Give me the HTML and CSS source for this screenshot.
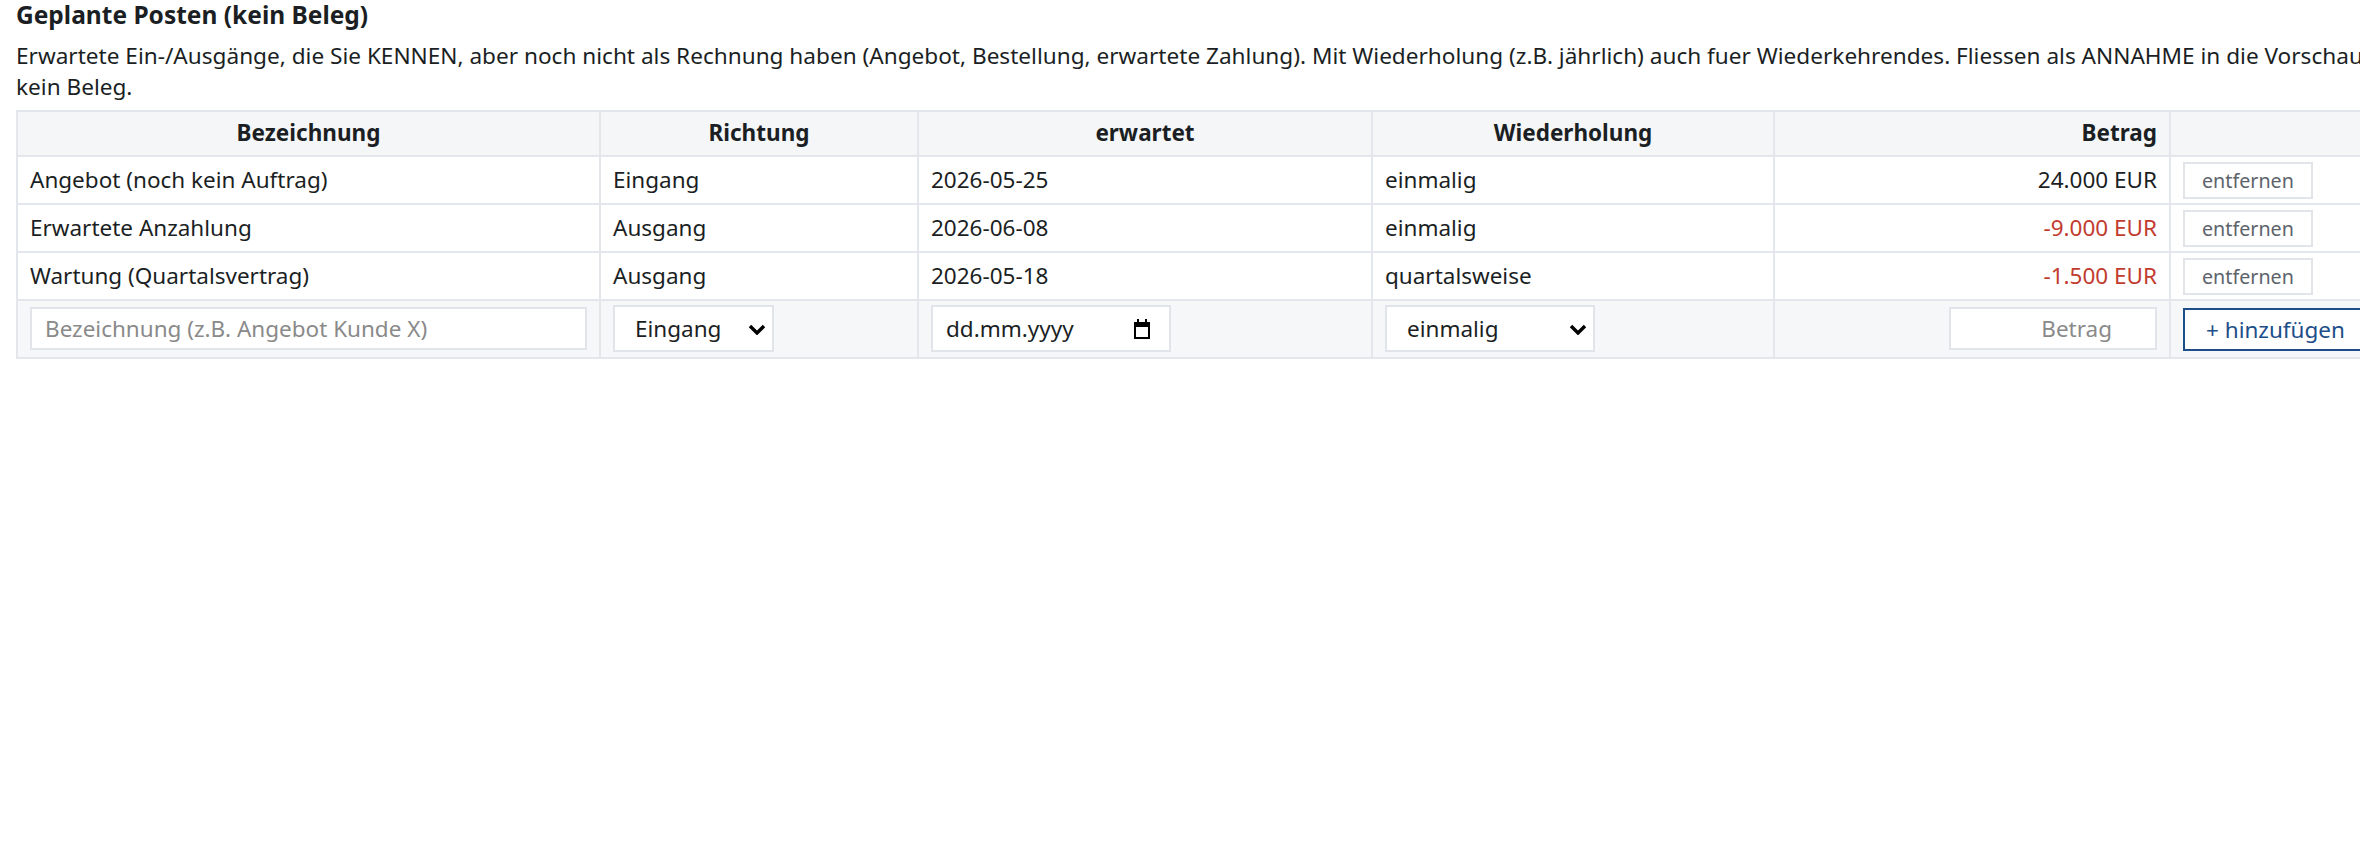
FILE: index.html
```html
<!DOCTYPE html>
<html lang="de">
<head>
  <meta charset="UTF-8">
  <title>Geplante Posten</title>
  <link rel="stylesheet" href="styles.css">
</head>
<body>
  <div class="page">
    <h3 class="title">Geplante Posten (kein Beleg)</h3>
    <p class="hint">Erwartete Ein-/Ausgänge, die Sie KENNEN, aber noch nicht als Rechnung haben (Angebot, Bestellung, erwartete Zahlung). Mit Wiederholung (z.B. jährlich) auch fuer Wiederkehrendes. Fliessen als ANNAHME in die Vorschau ein, sind aber kein Beleg.</p>

    <table class="plan">
      <colgroup>
        <col class="w-name"><col class="w-dir"><col class="w-date"><col class="w-rep"><col class="w-amt"><col class="w-act">
      </colgroup>
      <thead>
        <tr><th>Bezeichnung</th><th>Richtung</th><th>erwartet</th><th>Wiederholung</th><th class="num">Betrag</th><th></th></tr>
      </thead>
      <tbody>
        <tr>
          <td>Angebot (noch kein Auftrag)</td><td>Eingang</td><td>2026-05-25</td><td>einmalig</td>
          <td class="num">24.000 EUR</td><td class="act"><button class="btn-remove">entfernen</button></td>
        </tr>
        <tr>
          <td>Erwartete Anzahlung</td><td>Ausgang</td><td>2026-06-08</td><td>einmalig</td>
          <td class="num neg">-9.000 EUR</td><td class="act"><button class="btn-remove">entfernen</button></td>
        </tr>
        <tr>
          <td>Wartung (Quartalsvertrag)</td><td>Ausgang</td><td>2026-05-18</td><td>quartalsweise</td>
          <td class="num neg">-1.500 EUR</td><td class="act"><button class="btn-remove">entfernen</button></td>
        </tr>
        <tr class="new-row">
          <td><input type="text" class="in-name" placeholder="Bezeichnung (z.B. Angebot Kunde X)"></td>
          <td>
            <span class="pick">
              <select class="sel-dir"><option>Eingang</option><option>Ausgang</option></select>
              <svg width="18" height="11" viewBox="0 0 18 11"><path d="M2 2 L9 9 L16 2" fill="none" stroke="#000" stroke-width="3.4"/></svg>
            </span>
          </td>
          <td>
            <span class="pick">
              <input type="text" class="in-date" placeholder="dd.mm.yyyy">
              <svg class="cal" width="18" height="20" viewBox="0 0 18 20">
                <rect x="4" y="0" width="2" height="4" fill="#000"/>
                <rect x="12" y="0" width="2" height="4" fill="#000"/>
                <rect x="1" y="3" width="16" height="5" fill="#000"/>
                <rect x="2" y="4" width="14" height="15" fill="none" stroke="#000" stroke-width="2"/>
              </svg>
            </span>
          </td>
          <td>
            <span class="pick">
              <select class="sel-rep"><option>einmalig</option><option>monatlich</option><option>quartalsweise</option><option>jährlich</option></select>
              <svg width="18" height="11" viewBox="0 0 18 11"><path d="M2 2 L9 9 L16 2" fill="none" stroke="#000" stroke-width="3.4"/></svg>
            </span>
          </td>
          <td class="num"><input type="number" class="in-amt" placeholder="Betrag"></td>
          <td class="act"><button class="btn-add">+ hinzufügen</button></td>
        </tr>
      </tbody>
    </table>
  </div>
</body>
</html>
```
FILE: styles.css
```css
body { margin: 0; overflow-x: hidden; font-family: "Noto Sans", sans-serif; color: #1b1f24; background: #fff; }
.page { width: 2366px; padding: 0 16px; }
.title { font-size: 24.5px; font-weight: 700; line-height: 30px; margin: 0; }
.hint { width: 2500px; font-size: 22.6px; line-height: 31px; margin: 10px 0 8px; }

.plan { width: 2366px; border-collapse: collapse; table-layout: fixed; font-size: 22.5px; }
.w-name { width: 583px; }
.w-dir { width: 318px; }
.w-date { width: 454px; }
.w-rep { width: 402px; }
.w-amt { width: 396px; }
.w-act { width: 213px; }
.plan th, .plan td {
  border: 2px solid #e3e6ea; padding: 11px 12px; line-height: 24px; text-align: left;
}
.plan th { background: #f5f6f8; font-weight: 700; text-align: center; padding: 9px 12px 10px; }
.plan .num { text-align: right; }
.plan .neg { color: #c23b2e; }
.plan td.act { line-height: 0; padding-top: 0; padding-bottom: 0; }

.new-row td { background: #f6f7f9; line-height: 0; padding-top: 4px; padding-bottom: 5px; }
.new-row input, .new-row select {
  box-sizing: border-box; font: inherit; line-height: normal; color: #1b1f24; background: #fff;
  border: 2px solid #e1e4e8; border-radius: 0; vertical-align: middle; outline: none;
}
.new-row input::placeholder { color: #8a8a8a; }
.pick { position: relative; display: inline-block; vertical-align: middle; }
.pick svg { position: absolute; right: 8px; top: 50%; margin-top: -5px; pointer-events: none; }
.pick svg.cal { right: 20px; margin-top: -10px; }
.new-row select { appearance: none; -webkit-appearance: none; height: 47px; padding: 0 30px 0 20px; }
.sel-dir { width: 161px; }
.sel-rep { width: 210px; }
.in-name { width: 100%; height: 43px; padding: 0 13px; }
.new-row .in-date { width: 240px; height: 47px; padding: 0 13px; }
.new-row .in-date::placeholder { color: #1b1f24; }
.in-amt { width: 208px; height: 43px; padding: 0 28px 0 12px; text-align: right; }

.btn-remove {
  font: inherit; font-size: 19.7px; line-height: 33px; height: 37px; color: #5d636b; background: #fff;
  border: 2px solid #e1e4e8; padding: 0 17px; vertical-align: middle; cursor: pointer;
}
.btn-add {
  font: inherit; line-height: 39px; height: 43px; color: #1d4e89; background: #fff; white-space: nowrap;
  border: 2px solid #1d4e89; padding: 0 21px; vertical-align: middle; cursor: pointer;
}
```
